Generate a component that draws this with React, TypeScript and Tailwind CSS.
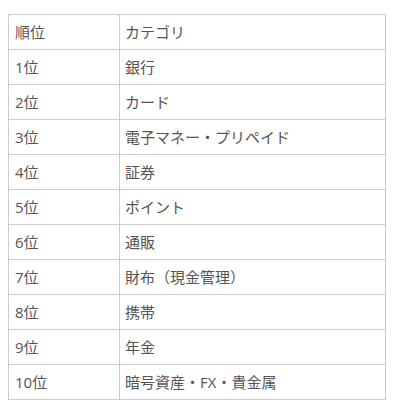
import React from "react";

const rows: [string, string][] = [
  ["順位", "カテゴリ"],
  ["1位", "銀行"],
  ["2位", "カード"],
  ["3位", "電子マネー・プリペイド"],
  ["4位", "証券"],
  ["5位", "ポイント"],
  ["6位", "通販"],
  ["7位", "財布（現金管理）"],
  ["8位", "携帯"],
  ["9位", "年金"],
  ["10位", "暗号資産・FX・貴金属"],
];

export default function App() {
  return (
    <div className="bg-white w-[406px] h-[408px] pt-[14px] pl-[8px]" style={{ fontFamily: '"Open Sans", "Noto Sans CJK JP", sans-serif' }}>
      <table className="border-collapse text-[15px] text-[#555] w-[378px]">
        <tbody>
          {rows.map(([a, b], i) => (
            <tr key={i} className="h-[35px]">
              <td className="border border-[#ccc] pl-[6px] pr-[5px] w-[111px] align-middle">{a}</td>
              <td className="border border-[#ccc] px-[5px] align-middle">{b}</td>
            </tr>
          ))}
        </tbody>
      </table>
    </div>
  );
}
